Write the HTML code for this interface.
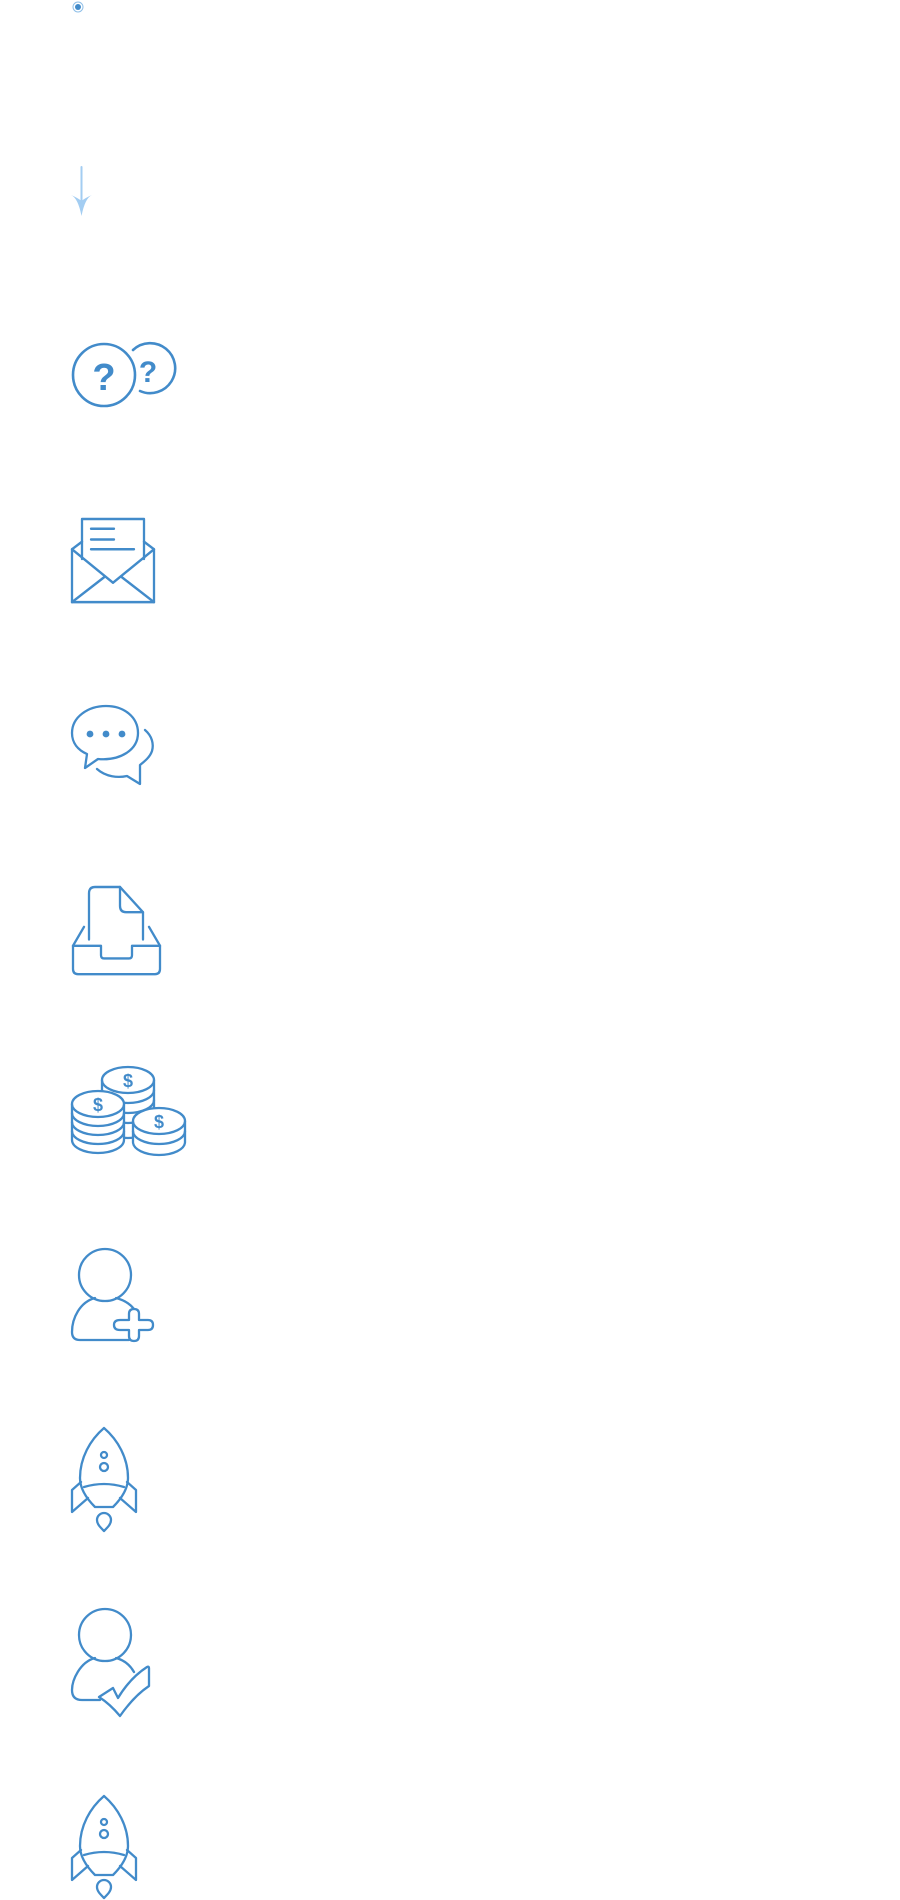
<!DOCTYPE html>
<html><head><meta charset="utf-8"><style>html,body{margin:0;padding:0;background:#fff;width:900px;height:1900px;overflow:hidden}svg{position:absolute;left:0;top:0}</style></head>
<body>
<svg width="900" height="1900" viewBox="0 0 900 1900" fill="none" stroke="#428bca" stroke-width="2.3" stroke-linejoin="round" stroke-linecap="round">
<circle cx="78" cy="7" r="5" stroke="#8fbfe8" stroke-width="1"/>
<circle cx="78" cy="7" r="3" fill="#428bca" stroke="none"/>
<line x1="81.5" y1="167" x2="81.5" y2="205" stroke="#a3cdf2" stroke-width="2"/>
<path d="M71,195 Q78,198 81.5,216 Q85,198 92,195 Q85,198 81.5,201 Q78,198 71,195Z" fill="#a3cdf2" stroke="none"/>
<!-- questions -->
<circle cx="104" cy="375" r="31" stroke-width="2.6"/>
<path d="M133,350 A25,25 0 1 1 140,391" stroke-width="2.6"/>
<text x="104" y="390" font-family="Liberation Sans, sans-serif" font-weight="bold" font-size="38" fill="#428bca" stroke="none" text-anchor="middle">?</text>
<text x="148" y="382" font-family="Liberation Sans, sans-serif" font-weight="bold" font-size="30" fill="#428bca" stroke="none" text-anchor="middle">?</text>
<!-- envelope -->
<g transform="translate(0,519) scale(1,1.08) translate(0,-515)">
<path d="M82,552 L82,515 L144,515 L144,552"/>
<path d="M91,524 H114 M91,534 H114 M91,543 H134"/>
<path d="M82,536 L72,543 L72,592 L154,592 L154,543 L144,536"/>
<path d="M72,543 L113,574 L154,543 M72,592 L104,569 M154,592 L122,569"/>
</g>
<!-- chat -->
<g transform="translate(0,16)">
<path d="M98,743 C120,745 138,734 138,717 C138,701 124,690 106,690 C88,690 72,701 72,717 C72,727 78,734 87,738 L85,752 Z"/>
<circle cx="90" cy="718" r="3.4" fill="#428bca" stroke="none"/>
<circle cx="106" cy="718" r="3.4" fill="#428bca" stroke="none"/>
<circle cx="122" cy="718" r="3.4" fill="#428bca" stroke="none"/>
<path d="M145,714 C152,720 154,728 152,735 C150,741 145,745 140,749 L140,768 L127,760 C118,762 106,761 97,753"/>
</g>
<!-- inbox -->
<g transform="translate(0,887) scale(1,1.05) translate(0,-862)">
<path d="M89,912 L89,868 Q89,862 95,862 L120,862 L143,886 L143,912"/>
<path d="M120,862 L120,880 Q120,886 126,886 L143,886"/>
<path d="M73,918 L73,940 Q73,945 78,945 L155,945 Q160,945 160,940 L160,918 L132,918 L132,927 Q132,930 129,930 L104,930 Q101,930 101,927 L101,918 Z"/>
<path d="M73,918 L84,900 M160,918 L149,900"/>
</g>
<!-- coins -->
<g stroke-width="2.3">
<path d="M102,1080 L102,1125 A26,13 0 0 0 154,1125 L154,1080 Z" fill="#fff"/>
<path d="M102,1090 A26,13 0 0 0 154,1090 M102,1100 A26,13 0 0 0 154,1100 M102,1110 A26,13 0 0 0 154,1110"/>
<ellipse cx="128" cy="1080" rx="26" ry="13" fill="#fff"/>
<text x="128" y="1087" font-family="Liberation Sans, sans-serif" font-weight="bold" font-size="18" fill="#428bca" stroke="none" text-anchor="middle">$</text>
<path d="M72,1104 L72,1140 A26,13 0 0 0 124,1140 L124,1104 Z" fill="#fff"/>
<path d="M72,1113 A26,13 0 0 0 124,1113 M72,1122 A26,13 0 0 0 124,1122 M72,1131 A26,13 0 0 0 124,1131"/>
<ellipse cx="98" cy="1104" rx="26" ry="13" fill="#fff"/>
<text x="98" y="1111" font-family="Liberation Sans, sans-serif" font-weight="bold" font-size="18" fill="#428bca" stroke="none" text-anchor="middle">$</text>
<path d="M133,1121 L133,1142 A26,13 0 0 0 185,1142 L185,1121 Z" fill="#fff"/>
<path d="M133,1131 A26,13 0 0 0 185,1131"/>
<ellipse cx="159" cy="1121" rx="26" ry="13" fill="#fff"/>
<text x="159" y="1128" font-family="Liberation Sans, sans-serif" font-weight="bold" font-size="18" fill="#428bca" stroke="none" text-anchor="middle">$</text>
</g>
<!-- user plus -->
<circle cx="105" cy="1275" r="26"/>
<path d="M95,1298 C80,1302 72,1318 72,1332 Q72,1340 80,1340 L129,1340"/>
<path d="M116,1298 C124,1300 130,1304 134,1309"/>
<path d="M129,1314 Q129,1309 134,1309 Q139,1309 139,1314 L139,1320 L148,1320 Q153,1320 153,1325 Q153,1330 148,1330 L139,1330 L139,1336 Q139,1341 134,1341 Q129,1341 129,1336 L129,1330 L120,1330 Q114,1330 114,1325 Q114,1320 120,1320 L129,1320 Z" fill="#fff"/>
<!-- rocket 1 -->
<g transform="translate(0,1428)">
<path d="M104,0 C90,12 80,30 80,50 C80,62 88,72 95,79 L113,79 C120,72 128,62 128,50 C128,30 118,12 104,0 Z"/>
<path d="M84,59 Q104,53 124,59"/>
<path d="M81,54 L72,62 L72,84 L88,70 M127,54 L136,62 L136,84 L120,70"/>
<circle cx="104" cy="27" r="3"/><circle cx="104" cy="39" r="4"/>
<path d="M104,103 C100,99 97,96 97,92 A7,7 0 0 1 111,92 C111,96 108,99 104,103Z"/>
</g>
<!-- user check -->
<circle cx="105" cy="1635" r="26"/>
<path d="M95,1658 C80,1662 72,1680 72,1690 Q72,1700 82,1700 L100,1700"/>
<path d="M116,1658 C124,1660 130,1665 134,1672"/>
<path d="M99,1697 L113,1688 L118,1698 Q130,1678 147,1667 Q149,1666 149,1668 L149,1686 Q134,1696 120,1716 Q110,1704 99,1697Z" fill="#fff"/>
<!-- rocket 2 -->
<g transform="translate(0,1796)">
<path d="M104,0 C90,12 80,30 80,50 C80,62 88,72 95,79 L113,79 C120,72 128,62 128,50 C128,30 118,12 104,0 Z"/>
<path d="M84,59 Q104,53 124,59"/>
<path d="M81,54 L72,62 L72,84 L88,70 M127,54 L136,62 L136,84 L120,70"/>
<circle cx="104" cy="26" r="3"/><circle cx="104" cy="38" r="4"/>
<path d="M104,102 C100,98 97,95 97,91 A7,7 0 0 1 111,91 C111,95 108,98 104,102Z"/>
</g>
</svg>
</body></html>
